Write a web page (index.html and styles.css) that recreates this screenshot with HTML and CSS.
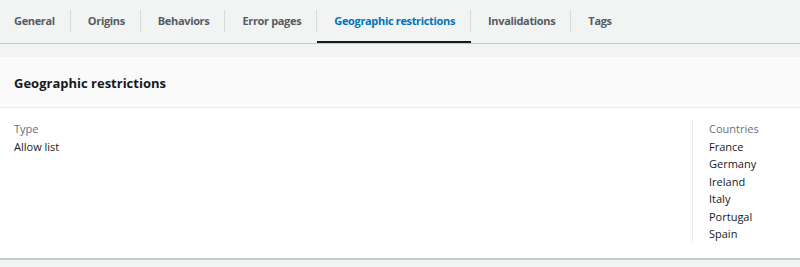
FILE: index.html
```html
<!DOCTYPE html>
<html>
<head>
<meta charset="utf-8">
<link rel="stylesheet" href="styles.css">
</head>
<body>
<nav class="tabs">
  <div class="tab">General</div>
  <div class="tab">Origins</div>
  <div class="tab">Behaviors</div>
  <div class="tab">Error pages</div>
  <div class="tab active">Geographic restrictions</div>
  <div class="tab">Invalidations</div>
  <div class="tab last">Tags</div>
</nav>
<section class="panel">
  <header class="panel-header"><h2>Geographic restrictions</h2></header>
  <div class="panel-body">
    <div class="col col-main">
      <div class="label">Type</div>
      <div class="value">Allow list</div>
    </div>
    <div class="col col-side">
      <div class="label">Countries</div>
      <div class="value">France</div>
      <div class="value">Germany</div>
      <div class="value">Ireland</div>
      <div class="value">Italy</div>
      <div class="value">Portugal</div>
      <div class="value">Spain</div>
    </div>
  </div>
</section>
</body>
</html>
```
FILE: styles.css
```css
html, body {
  margin: 0;
  padding: 0;
  background: #f2f3f3;
  font-family: "Open Sans", "Liberation Sans", sans-serif;
  color: #16191f;
}
.tabs {
  display: flex;
  height: 43px;
  border-bottom: 1px solid #c6cbcb;
  align-items: stretch;
}
.tab {
  position: relative;
  display: flex;
  align-items: center;
  padding: 0 16px 0 17px;
  font-size: 11px;
  font-weight: 700;
  color: #545b64;
  letter-spacing: -0.34px;
  border-bottom: 2px solid transparent;
  height: 41px;
}
.tab:first-child { padding-left: 14px; }
.tab::after {
  content: "";
  position: absolute;
  right: 0;
  top: 10px;
  height: 22px;
  width: 1px;
  background: #d5dbdb;
}
.tab.last::after { display: none; }
.tab.active {
  color: #0073bb;
  border-bottom-color: #16191f;
}
.panel {
  margin-top: 13px;
  background: #ffffff;
  border-bottom: 2px solid #c6cbcb;
}
.panel-header {
  background: #fafafa;
  height: 50px;
  border-bottom: 1px solid #eaeded;
  display: flex;
  align-items: center;
  padding: 0 14px;
}
.panel-header h2 {
  margin: 0;
  font-size: 13px;
  font-weight: 700;
  color: #16191f;
  padding-top: 1px;
}
.panel-body {
  display: flex;
  padding: 12px 14px 15px 14px;
}
.col-main { flex: 1; }
.col-side {
  width: 77px;
  border-left: 1px solid #eaeded;
  padding-left: 16px;
}
.label, .value {
  font-size: 11px;
  line-height: 17.5px;
}
.label { color: #687078; }
.value { color: #16191f; }
```
